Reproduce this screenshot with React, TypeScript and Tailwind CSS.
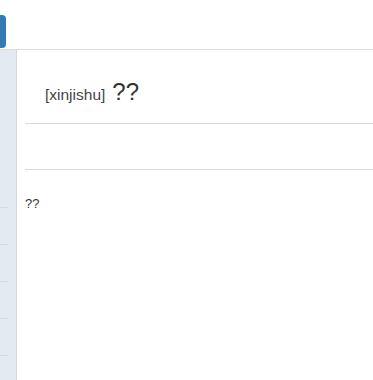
export default function App() {
  const sideRows = [0, 1, 2, 3, 4, 5];

  return (
    <div className="w-[373px] h-[380px] overflow-hidden bg-white font-['Liberation_Sans',Arial,sans-serif] text-[#333]">
      <header className="h-[50px] border-b border-[#dddddd] flex items-start">
        <div className="mt-[15px] w-[6px] h-[33px] rounded-r-[4px] bg-[#337ab7]" />
      </header>
      <div className="flex h-[330px]">
        <aside className="w-[17px] bg-[#e4eaf1] border-r border-[#d3d9df] flex flex-col pt-[157px]">
          {sideRows.map((i) => (
            <div key={i} className="h-[37px] border-t border-[#d4dbe3] w-[8px] shrink-0" />
          ))}
        </aside>
        <main className="flex-1 pl-[8px]">
          <div className="border-b border-[#d9d9d9] pt-[29px] pb-[15px] pl-[20px]">
            <h1 className="text-[24px] leading-[26px] flex items-baseline">
              <span className="text-[15.5px] text-[#444] mr-[7px]">[xinjishu]</span>
              <span>??</span>
            </h1>
          </div>
          <div className="h-[46px] border-b border-[#d9d9d9]" />
          <p className="mt-[26px] text-[13px] leading-[16px]">??</p>
        </main>
      </div>
    </div>
  );
}
